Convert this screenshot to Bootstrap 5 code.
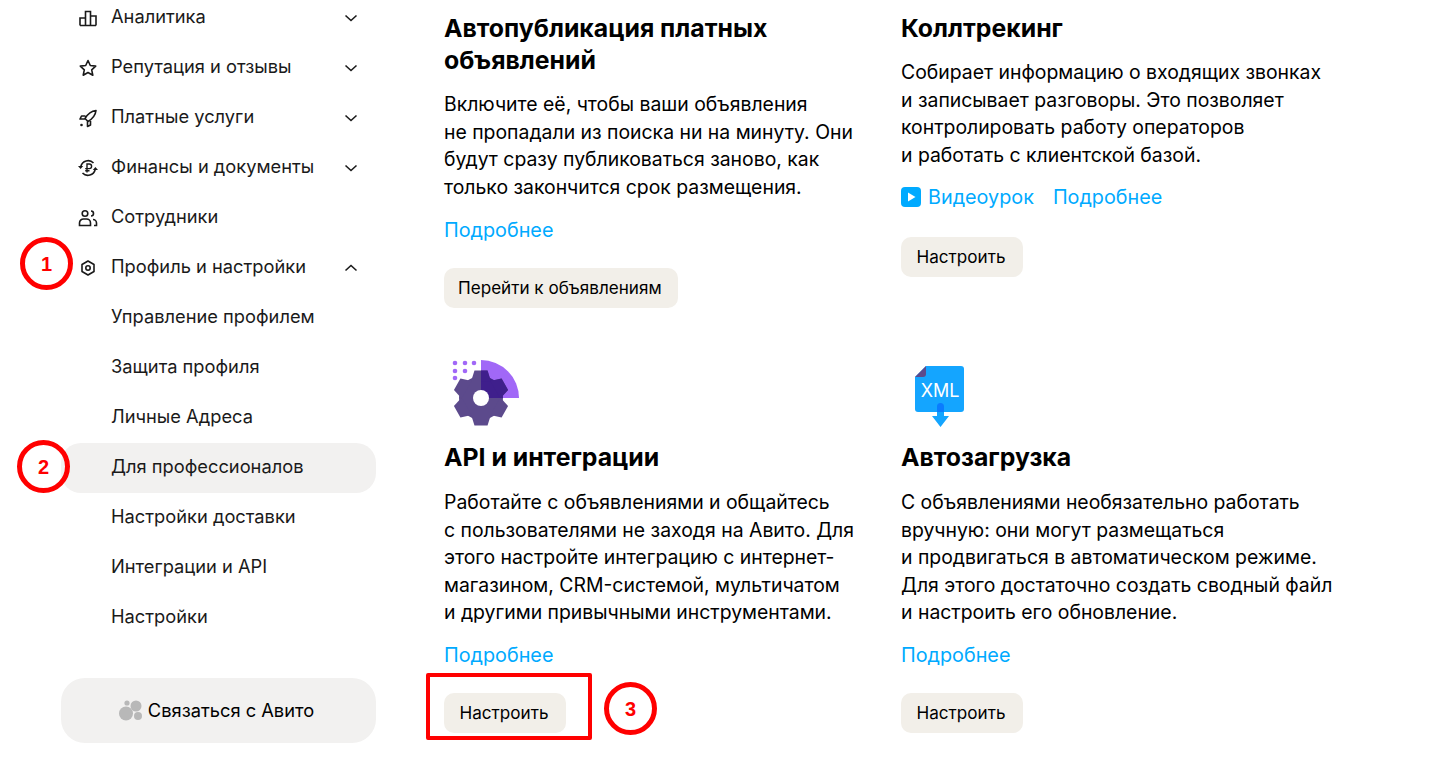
<!DOCTYPE html>
<html lang="ru">
<head>
    <meta charset="UTF-8">
    <meta name="viewport" content="width=device-width, initial-scale=1.0">
    <title>Для профессионалов</title>
    <link href="https://cdn.jsdelivr.net/npm/bootstrap@5.3.0/dist/css/bootstrap.min.css" rel="stylesheet">
    <style>
        html, body {
            height: 778px;
            overflow: hidden;
        }
        body {
            background: #fff;
            color: #000;
            font-family: "Inter", "Noto Sans", sans-serif;
            font-size: 18.3px;
            position: relative;
        }
        .side-col {
            width: 315px;
            margin-left: 61px;
            margin-top: -7px;
            flex: none;
        }
        .side-item {
            height: 50px;
            padding: 0 18px 3px 17px;
            color: #1a1a1a;
            border-radius: 20px;
        }
        .side-item.is-active {
            background: #f2f1f0;
        }
        .side-label {
            margin-left: 13px;
        }
        .side-sub {
            padding-left: 50px;
        }
        .side-ico {
            width: 20px;
            height: 20px;
            flex: none;
            margin-top: 3px;
        }
        .side-chev {
            margin-top: 3px;
        }
        .contact-box {
            height: 65px;
            margin-top: 35px;
            padding-right: 4px;
            background: #f2f1f0;
            border-radius: 24px;
            color: #000;
            gap: 6px;
        }
        .main-col {
            margin-left: 68px;
            padding-top: 12px;
            width: 914px;
            flex: none;
        }
        .tile {
            width: 457px;
            padding-right: 10px;
        }
        .row-first {
            margin-bottom: 47px;
        }
        .tile-art {
            width: 80px;
            height: 72px;
            display: block;
            margin-bottom: 14px;
        }
        .tile-title {
            font-size: 24.8px;
            line-height: 32px;
            font-weight: 700;
            margin: 0;
        }
        .tile-text {
            font-size: 19.4px;
            line-height: 27.5px;
            margin: 15px 0 0;
            color: #000;
            white-space: nowrap;
        }
        .tile-links {
            margin-top: 15px;
            line-height: 28px;
            font-size: 19.8px;
        }
        .tile-links a {
            color: #00aaff;
            text-decoration: none;
        }
        .row-second .tile-text {
            margin-top: 16px;
        }
        .row-second .tile-links {
            margin-top: 14px;
        }
        .links-video {
            margin-top: 14px;
            margin-bottom: 2px;
            height: 28px;
        }
        .video-mark {
            margin-right: 7px;
        }
        .link-video {
            margin-right: 19px;
        }
        .btn-tile {
            margin-top: 24px;
            height: 40px;
            min-width: 122px;
            padding: 0 16px 0 14px;
            background: #f2efe9;
            border: 0;
            border-radius: 10px;
            color: #000;
            font-size: 17.1px;
            line-height: 40px;
        }
        .mark-ring {
            position: absolute;
            width: 53px;
            height: 53px;
            border: 5px solid #ff0000;
            border-radius: 50%;
            color: #ff0000;
            font: 700 20px/1 "Liberation Sans", sans-serif;
            display: flex;
            align-items: center;
            justify-content: center;
            background: transparent;
        }
        .ring-a { left: 20px; top: 237px; }
        .ring-b { left: 17px; top: 440px; }
        .ring-c { left: 604px; top: 682px; }
        .mark-rect {
            position: absolute;
            left: 426px;
            top: 673px;
            width: 166px;
            height: 67px;
            border: 4px solid #ff0000;
            border-radius: 2px;
        }
    </style>
</head>
<body>
    <div class="d-flex align-items-start">
        <nav class="side-col">
            <div class="side-item d-flex align-items-center">
                <svg class="side-ico" viewBox="0 0 20 20" fill="none" stroke="#1a1a1a" stroke-width="1.6"><path d="M2 17.500V10h5.500M7.500 17.500V3.500h5v14M12.500 8h5.500v9.500M2 17.500h16"/></svg>
                <span class="side-label flex-grow-1">Аналитика</span>
                <svg class="side-chev" width="14" height="14" viewBox="0 0 14 14" fill="none" stroke="#1a1a1a" stroke-width="1.6"><path d="M1.500 4.500 7 9.500l5.500-5"/></svg>
            </div>
            <div class="side-item d-flex align-items-center">
                <svg class="side-ico" viewBox="0 0 20 20" fill="none" stroke="#1a1a1a" stroke-width="1.6" stroke-linejoin="round"><path d="M10 2.500l2.300 5 5.400.6-4 3.700 1.100 5.400L10 14.500l-4.800 2.700 1.100-5.400-4-3.700 5.400-.6z"/></svg>
                <span class="side-label flex-grow-1">Репутация и отзывы</span>
                <svg class="side-chev" width="14" height="14" viewBox="0 0 14 14" fill="none" stroke="#1a1a1a" stroke-width="1.6"><path d="M1.500 4.500 7 9.500l5.500-5"/></svg>
            </div>
            <div class="side-item d-flex align-items-center">
                <svg class="side-ico" viewBox="0 0 20 20" fill="none" stroke="#1a1a1a" stroke-width="1.6" stroke-linejoin="round"><path d="M18 2.500c-5 .5-8 3-11 8l3 3c5-3 7.500-6 8-11zM7.500 8H3.500l-1.500 3h5M12.500 13v4l-3 1.500v-5"/><circle cx="3.500" cy="17" r="1.300" fill="#1a1a1a" stroke="none"/></svg>
                <span class="side-label flex-grow-1">Платные услуги</span>
                <svg class="side-chev" width="14" height="14" viewBox="0 0 14 14" fill="none" stroke="#1a1a1a" stroke-width="1.6"><path d="M1.500 4.500 7 9.500l5.500-5"/></svg>
            </div>
            <div class="side-item d-flex align-items-center">
                <svg class="side-ico" viewBox="0 0 20 20" fill="none" stroke="#1a1a1a" stroke-width="1.6"><path d="M2.800 8.500A7.500 7.500 0 0 1 15.500 5M17.200 11.500A7.500 7.500 0 0 1 4.500 15"/><path d="M9 14.500V6h2.300a2.300 2.300 0 0 1 0 4.600H7.200M7.200 12.700H11.500" stroke-width="1.400"/><path d="M0 8h5.200L2.600 11zM14.800 12h5.200L17.400 9z" fill="#1a1a1a" stroke="none"/></svg>
                <span class="side-label flex-grow-1">Финансы и документы</span>
                <svg class="side-chev" width="14" height="14" viewBox="0 0 14 14" fill="none" stroke="#1a1a1a" stroke-width="1.6"><path d="M1.500 4.500 7 9.500l5.500-5"/></svg>
            </div>
            <div class="side-item d-flex align-items-center">
                <svg class="side-ico" viewBox="0 0 20 20" fill="none" stroke="#1a1a1a" stroke-width="1.6"><circle cx="7" cy="5.500" r="2.800"/><path d="M1.500 17.500v-2.500a4 4 0 0 1 4-4h3a4 4 0 0 1 4 4v2.500z"/><path d="M13 3a2.500 2.500 0 0 1 0 5M15 11.500a3.500 3.500 0 0 1 3.500 3.500v2.500H16"/></svg>
                <span class="side-label flex-grow-1">Сотрудники</span>
            </div>
            <div class="side-item d-flex align-items-center">
                <svg class="side-ico" viewBox="0 0 20 20" fill="none" stroke="#1a1a1a" stroke-width="1.6" stroke-linejoin="round"><path d="M10 3l6 3.500v7L10 17l-6-3.500v-7z"/><circle cx="10" cy="10" r="2.200"/></svg>
                <span class="side-label flex-grow-1">Профиль и настройки</span>
                <svg class="side-chev" width="14" height="14" viewBox="0 0 14 14" fill="none" stroke="#1a1a1a" stroke-width="1.6"><path d="M1.500 9.500 7 4.500l5.500 5"/></svg>
            </div>
            <div class="side-item side-sub d-flex align-items-center">Управление профилем</div>
            <div class="side-item side-sub d-flex align-items-center">Защита профиля</div>
            <div class="side-item side-sub d-flex align-items-center">Личные Адреса</div>
            <div class="side-item side-sub is-active d-flex align-items-center">Для профессионалов</div>
            <div class="side-item side-sub d-flex align-items-center">Настройки доставки</div>
            <div class="side-item side-sub d-flex align-items-center">Интеграции и API</div>
            <div class="side-item side-sub d-flex align-items-center">Настройки</div>
            <div class="contact-box d-flex align-items-center justify-content-center">
                <svg width="23" height="21" viewBox="0 0 23 21" fill="#b8b8b8"><circle cx="7" cy="13.500" r="7"/><circle cx="17" cy="6" r="5.500"/><circle cx="19" cy="16" r="4"/><circle cx="8" cy="3" r="2.600"/></svg>
                <span>Связаться с Авито</span>
            </div>
        </nav>

        <main class="main-col">
            <div class="d-flex row-first">
                <div class="tile">
                    <h2 class="tile-title">Автопубликация платных<br>объявлений</h2>
                    <p class="tile-text">Включите её, чтобы ваши объявления<br>не пропадали из поиска ни на минуту. Они<br>будут сразу публиковаться заново, как<br>только закончится срок размещения.</p>
                    <div class="tile-links"><a href="#">Подробнее</a></div>
                    <button class="btn btn-tile">Перейти к объявлениям</button>
                </div>
                <div class="tile">
                    <h2 class="tile-title">Коллтрекинг</h2>
                    <p class="tile-text">Собирает информацию о входящих звонках<br>и записывает разговоры. Это позволяет<br>контролировать работу операторов<br>и работать с клиентской базой.</p>
                    <div class="tile-links links-video d-flex align-items-center">
                        <svg width="20" height="20" viewBox="0 0 20 20" class="video-mark"><rect width="20" height="20" rx="4" fill="#00aaff"/><path d="M7 5.500v9l7.500-4.500z" fill="#fff"/></svg>
                        <a href="#" class="link-video">Видеоурок</a>
                        <a href="#">Подробнее</a>
                    </div>
                    <button class="btn btn-tile">Настроить</button>
                </div>
            </div>
            <div class="d-flex row-second">
                <div class="tile">
                    <svg class="tile-art" viewBox="0 0 80 72">
                        <defs>
                            <g id="gearShape">
                                <circle cx="37" cy="43" r="22"/>
                                <path id="gearTooth" d="M30.500 15.500h13l3.500 11H27z"/>
                                <use href="#gearTooth" transform="rotate(60 37 43)"/>
                                <use href="#gearTooth" transform="rotate(120 37 43)"/>
                                <use href="#gearTooth" transform="rotate(180 37 43)"/>
                                <use href="#gearTooth" transform="rotate(240 37 43)"/>
                                <use href="#gearTooth" transform="rotate(300 37 43)"/>
                            </g>
                            <clipPath id="gearQuarter"><rect x="37" y="0" width="43" height="43"/></clipPath>
                        </defs>
                        <path d="M37 5a38 38 0 0 1 38 38H37z" fill="#a168f7"/>
                        <use href="#gearShape" fill="#5c4a8c"/>
                        <use href="#gearShape" fill="#3f1f8c" clip-path="url(#gearQuarter)"/>
                        <circle cx="37" cy="43" r="8" fill="#fff"/>
                        <g fill="#a168f7"><circle cx="11" cy="8" r="2.300"/><circle cx="21" cy="8" r="2.300"/><circle cx="30" cy="8" r="2.300"/><circle cx="11" cy="16" r="2.300"/><circle cx="21" cy="16" r="2.300"/><circle cx="11" cy="23" r="2.300"/></g>
                    </svg>
                    <h2 class="tile-title">API и интеграции</h2>
                    <p class="tile-text">Работайте с объявлениями и общайтесь<br>с пользователями не заходя на Авито. Для<br>этого настройте интеграцию с интернет-<br>магазином, CRM-системой, мультичатом<br>и другими привычными инструментами.</p>
                    <div class="tile-links"><a href="#">Подробнее</a></div>
                    <button class="btn btn-tile">Настроить</button>
                </div>
                <div class="tile">
                    <svg class="tile-art" viewBox="0 0 80 72">
                        <path d="M25 11h35a3 3 0 0 1 3 3v40a3 3 0 0 1-3 3H17a3 3 0 0 1-3-3V22z" fill="#14a5ff"/>
                        <path d="M14 22l11-11v8a3 3 0 0 1-3 3z" fill="#5c4a8c"/>
                        <text x="39" y="42" text-anchor="middle" fill="#fff" font-family="Inter, sans-serif" font-size="18">XML</text>
                        <path d="M36 57h7v4h5l-8.500 11L31 61h5z" fill="#14a5ff"/>
                        <path d="M36 51.500a3.500 3.500 0 0 1 7 0V57h-7z" fill="#0a7cff"/>
                    </svg>
                    <h2 class="tile-title">Автозагрузка</h2>
                    <p class="tile-text">С объявлениями необязательно работать<br>вручную: они могут размещаться<br>и продвигаться в автоматическом режиме.<br>Для этого достаточно создать сводный файл<br>и настроить его обновление.</p>
                    <div class="tile-links"><a href="#">Подробнее</a></div>
                    <button class="btn btn-tile">Настроить</button>
                </div>
            </div>
        </main>
    </div>

    <div class="mark-ring ring-a">1</div>
    <div class="mark-ring ring-b">2</div>
    <div class="mark-ring ring-c">3</div>
    <div class="mark-rect"></div>
    <script src="https://cdn.jsdelivr.net/npm/bootstrap@5.3.0/dist/js/bootstrap.bundle.min.js"></script>
</body>
</html>
